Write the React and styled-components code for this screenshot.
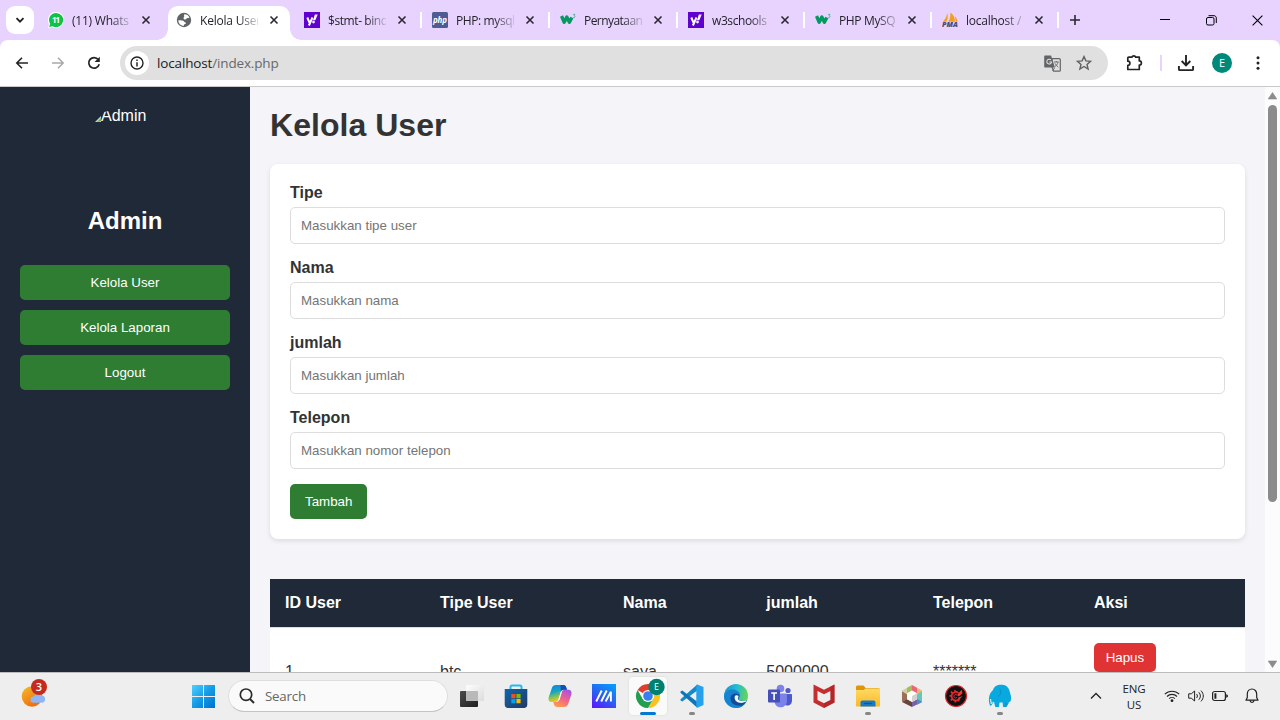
import React from "react";
import styled, { createGlobalStyle, css } from "styled-components";

const GlobalStyle = createGlobalStyle`
  * { box-sizing: border-box; }
  html, body { margin: 0; padding: 0; overflow: hidden; }
  body { font-family: "Liberation Sans", Arial, sans-serif; color: #333; }
`;

const uiFont = css`font-family: "Open Sans", "Noto Sans", sans-serif;`;

const Screen = styled.div`
  width: 1280px;
  height: 720px;
  display: flex;
  flex-direction: column;
  overflow: hidden;
  background: #e8d3ff;
`;

/* ---------- browser tab strip ---------- */
const TabStrip = styled.div`
  ${uiFont}
  display: flex;
  align-items: flex-start;
  height: 40px;
  flex: none;
  padding-left: 6px;
  background: #e8d3ff;
`;
const TabSearch = styled.div`
  width: 28px;
  height: 28px;
  margin: 6px 4px 0 0;
  border-radius: 9px;
  background: #fff;
  display: grid;
  place-items: center;
`;
const Tab = styled.div`
  width: ${(p) => p.$w}px;
  height: 40px;
  padding: 6px 0 6px 10px;
  display: flex;
  align-items: center;
  position: relative;
  flex: none;
`;
const ActiveShape = styled.div`
  position: absolute;
  z-index: 0;
  left: 2px;
  right: 4px;
  top: 6px;
  bottom: 0;
  border-radius: 10px 10px 0 0;
  background: #fff;
  &::before, &::after {
    content: "";
    position: absolute;
    bottom: 0;
    width: 11px;
    height: 11px;
  }
  &::before { right: 100%; background: radial-gradient(circle at 0 0, transparent 10.5px, #fff 11px); }
  &::after { left: 100%; background: radial-gradient(circle at 100% 0, transparent 10.5px, #fff 11px); }
`;
const Favicon = styled.div`
  width: 16px;
  height: 16px;
  z-index: 1;
  svg { display: block; }
`;
const TabTitle = styled.div`
  z-index: 1;
  width: 58px;
  margin-left: 8px;
  white-space: nowrap;
  font-size: 12px;
  letter-spacing: ${(p) => p.$ls || 0}px;
  line-height: 18px;
  padding-top: 1px;
  color: #25222b;
  mask-image: linear-gradient(90deg, #000 38px, transparent 62px);
`;
const TabClose = styled.div`
  z-index: 1;
  margin-left: ${(p) => (p.$tight ? 10 : 11)}px;
  width: 10px;
  height: 10px;
  svg { display: block; }
`;
const TabDivider = styled.div`
  width: 2px;
  height: 16px;
  margin-left: auto;
  background: #fff;
`;
const NewTab = styled.div`
  width: 32px;
  height: 40px;
  display: grid;
  place-items: center;
`;
const WindowControls = styled.div`
  margin-left: auto;
  display: flex;
  width: 138px;
  height: 40px;
`;
const WindowButton = styled.div`
  width: 46px;
  display: grid;
  place-items: center;
`;

/* ---------- toolbar ---------- */
const Toolbar = styled.div`
  ${uiFont}
  height: 47px;
  flex: none;
  display: flex;
  align-items: center;
  overflow: hidden;
  background: #fff;
  border-bottom: 1px solid #c9c9c9;
  border-radius: 8px 8px 0 0;
  padding-left: 4px;
`;
const ToolButton = styled.div`
  width: ${(p) => p.$w || 36}px;
  height: 34px;
  flex: none;
  display: grid;
  place-items: center;
`;
const Omnibox = styled.div`
  margin-left: 8px;
  width: 988px;
  height: 34px;
  flex: none;
  border-radius: 17px;
  background: #e0e0e0;
  display: flex;
  align-items: center;
  padding: 0 8px 0 5px;
`;
const SiteInfo = styled.div`
  width: 24px;
  height: 24px;
  border-radius: 50%;
  background: #fff;
  display: grid;
  place-items: center;
`;
const Address = styled.div`
  flex: 1;
  margin-left: 8px;
  font-size: 13.5px;
  letter-spacing: -0.15px;
  color: #202124;
  span { color: #66686c; }
`;
const ToolDivider = styled.div`
  width: 2px;
  height: 16px;
  flex: none;
  background: #e8d3ff;
`;
const Avatar = styled.div`
  width: 20px;
  height: 20px;
  border-radius: 50%;
  background: #00897b;
  color: #fff;
  font-size: 11px;
  line-height: 20px;
  text-align: center;
`;

/* ---------- page ---------- */
const Viewport = styled.div`
  display: flex;
  height: 585px;
  flex: none;
  overflow: hidden;
  background: #f4f4f9;
`;
const Sidebar = styled.aside`
  width: 250px;
  flex: none;
  padding: 20px;
  background: #1f2937;
  color: #fff;
  text-align: center;
`;
const Portrait = styled.div`
  width: 60px;
  height: 80px;
  margin: 0 auto 20px;
  display: flex;
  align-items: flex-start;
  font-size: 16px;
  line-height: 18px;
  svg { flex: none; margin: 9px 0 0 0; }
`;
const PortraitAlt = styled.span`
  clip-path: polygon(8px 0, 100% 0, 100% 100%, 0 100%, 0 9px, 3px 5px, 8px 4px);
`;
const Role = styled.h2`
  margin: 0 0 30px;
  font-size: 24px;
  line-height: 28px;
`;
const Button = styled.button`
  display: block;
  border: 0;
  margin: 0;
  font: 13.333px "Liberation Sans", Arial, sans-serif;
  line-height: 15px;
  color: #fff;
  background: ${(p) => (p.$danger ? "#e03333" : "#2e7d32")};
  padding: ${(p) => (p.$danger ? "7px 11.7px" : "10px 15px")};
  border-radius: 5px;
`;
const NavButton = styled(Button)`
  width: 210px;
  margin-bottom: 10px;
`;
const Main = styled.main`
  flex: 1;
  min-width: 0;
  padding: 20px;
`;
const Title = styled.h1`
  margin: 0 0 20px;
  font-size: 32px;
  letter-spacing: 0.04px;
  line-height: 37px;
`;
const FormCard = styled.form`
  background: #fff;
  padding: 20px;
  border-radius: 8px;
  box-shadow: 0 2px 5px rgba(0, 0, 0, 0.1);
  margin-bottom: 40px;
`;
const Field = styled.div`
  margin-bottom: 15px;
`;
const Label = styled.label`
  display: block;
  font-weight: bold;
  font-size: 16px;
  line-height: 18px;
  margin-bottom: 5px;
`;
const Input = styled.input`
  display: block;
  width: 100%;
  height: 37px;
  padding: 10px;
  border: 1px solid #ddd;
  border-radius: 5px;
  background: #fff;
  font: 13.333px "Liberation Sans", Arial, sans-serif;
  &::placeholder { color: #757575; }
`;
const Table = styled.table`
  width: 975px;
  table-layout: fixed;
  border-spacing: 0;
  background: #fff;
  font-size: 16px;
  line-height: 18px;
`;
const HeadCell = styled.th`
  width: ${(p) => p.$w}px;
  padding: 15px;
  height: 49px;
  text-align: left;
  color: #fff;
  background: #1f2937;
  border-bottom: 1px solid #ddd;
  background-clip: padding-box;
`;
const Cell = styled.td`
  height: 89px;
  padding: 15px;
  border-bottom: 1px solid #ddd;
  vertical-align: ${(p) => (p.$top ? "top" : "middle")};
`;
const Scrollbar = styled.div`
  width: 15px;
  flex: none;
  background: #fcfcfc;
  display: flex;
  flex-direction: column;
  align-items: center;
  padding: 5px 0 4px;
`;
const Thumb = styled.div`
  width: 9px;
  height: 397px;
  margin: 5px 0 auto;
  border-radius: 5px;
  background: #8b8b8b;
`;

/* ---------- taskbar ---------- */
const Taskbar = styled.div`
  ${uiFont}
  height: 48px;
  flex: none;
  border-top: 1px solid #bcbcbc;
  background: #eee;
  display: flex;
  align-items: center;
  padding: 0 0 1px 20px;
  color: #222;
`;
const Widgets = styled.div`
  width: 30px;
  height: 34px;
  margin-right: 142px;
  svg { display: block; }
`;
const Start = styled.div`
  width: 23px;
  height: 23px;
  margin: 1px 14px 0 0;
  svg { display: block; }
`;
const SearchBox = styled.div`
  width: 220px;
  height: 32px;
  margin: 0 2px 0 -1px;
  border-radius: 16px;
  background: #fafafa;
  border: 1px solid #dfdfdf;
  border-bottom-color: #c4c4c4;
  display: flex;
  align-items: center;
  gap: 10px;
  padding-left: 10px;
  font-size: 13.3px;
  letter-spacing: -0.2px;
  color: #666;
`;
const AppSlot = styled.div`
  width: 44px;
  height: 46px;
  display: flex;
  align-items: center;
  justify-content: center;
  position: relative;
`;
const AppTile = styled.div`
  width: 38px;
  height: 38px;
  border-radius: 4px;
  display: grid;
  place-items: center;
  ${(p) => p.$active && "background: #fafafa; box-shadow: 0 0 1px 1px #e4e4e4;"}
  svg { overflow: visible; }
`;
const Indicator = styled.div`
  position: absolute;
  top: 39px;
  height: 3px;
  border-radius: 2px;
  width: ${(p) => (p.$active ? 16 : 6)}px;
  background: ${(p) => (p.$active ? "#0078d4" : "#868686")};
`;
const Tray = styled.div`
  margin-left: auto;
  width: 200px;
  display: flex;
  align-items: center;
`;
const TrayItem = styled.div`
  width: ${(p) => p.$w}px;
  display: grid;
  place-items: center;
`;
const Language = styled.div`
  width: 44px;
  text-align: center;
  font-size: 11.5px;
  line-height: 16px;
  padding-top: 1px;
  letter-spacing: -0.1px;
`;

const Glyph = ({ w = 24, h = w, box = `0 0 ${w} ${h}`, children, ...rest }) => (
  <svg width={w} height={h} viewBox={box} fill="none" {...rest}>{children}</svg>
);

const WhatsApp = () => (
  <Glyph w={16}>
    <path d="M8 0a8 8 0 0 1 0 16c-1.400 0-2.600-.3-3.700-.9L0 16l1-4A8 8 0 0 1 8 0z" fill="#fff" />
    <path d="M8 .9a7.100 7.100 0 1 1-3.400 13.300l-3.400.7.900-3.200A7.100 7.100 0 0 1 8 .9z" fill="#10c24a" />
    <text x="8" y="10.900" fontSize="8" fontWeight="700" textAnchor="middle" fill="#fff" textLength="8">11</text>
  </Glyph>
);
const Globe = () => (
  <Glyph w={16}>
    <circle cx="8" cy="8" r="7.200" fill="#5f6368" />
    <path d="M8.400 2.300c2.300 0 4.100 1.200 5 3.200-1 .9-2.500.3-3.200 1.400-.8 1.200-2.400.3-2.600-.5-.3-1 .9-1.400.7-2.300-.2-.7-.6-1 .1-1.800zM2.200 8.300c1.600-.2 3.800.1 5 .4 1.200.3 1 1.600 2.200 1.800 1 .2.700 1.300-.4 1.500-1 .2-.7 1.300-1.700 1.900-2.800-.2-4.900-2.400-5.100-5.600z" fill="#fff" />
  </Glyph>
);
const Yahoo = () => (
  <Glyph w={16}>
    <path d="M0 0h16v16H0z" fill="#5f01d1" />
    <path d="M3.300 5.500l2.200 5.100M8.500 5.500l-3.600 8" stroke="#fff" strokeWidth="2" />
    <path d="M10.900 2.500h2.800l-2.400 5.700H9z" fill="#fff" />
    <circle cx="9.500" cy="10.100" r="1.350" fill="#fff" />
  </Glyph>
);
const Php = () => (
  <Glyph w={16}>
    <rect width="16" height="16" rx="1.500" fill="#4f5b93" />
    <text x="7.900" y="10.800" fontSize="8" fontStyle="italic" fontWeight="700" textAnchor="middle" fill="#fff" textLength="14">php</text>
  </Glyph>
);
const W3 = () => (
  <Glyph w={16}>
    <path d="M1.500 4L4.200 10.300 6.800 5 9.400 10.300 11.900 5.400" stroke="#059862" strokeWidth="3.400" strokeLinejoin="round" />
    <path d="M13.100 2.400h1.900l-.9 1.300c1.300.1 1.100 1.900-.2 1.900-.4 0-.7-.2-.9-.5" stroke="#2cae84" strokeWidth=".8" />
  </Glyph>
);
const Pma = () => (
  <Glyph w={16}>
    <path d="M5.200 1.200c.9 2.800.8 6-.9 8.500H.8c2-2 3.700-4.700 4.400-8.500zM8.200.5c3.300 2 4.700 5 4.800 9.200H6.500C8 7 8.700 4 8.200.5zM12.700 4.300c1.500 1.200 2.600 3 2.700 5.400h-1.800c0-2-.2-3.700-.9-5.400z" fill="#f89c1c" />
    <text x="0" y="15.400" fontSize="7" fontWeight="800" fontStyle="italic" fill="#454c78" textLength="15.800" lengthAdjust="spacingAndGlyphs">PMA</text>
  </Glyph>
);

const TABS = [
  { w: 128, title: "(11) Whats", ls: -0.22, icon: <WhatsApp /> },
  { w: 128, title: "Kelola User", ls: -0.2, icon: <Globe />, active: true },
  { w: 128, title: "$stmt- bind", ls: -0.42, icon: <Yahoo />, divider: true },
  { w: 128, title: "PHP: mysql", ls: -0.4, icon: <Php />, divider: true },
  { w: 128, title: "Pernyataan", ls: -0.55, icon: <W3 />, divider: true },
  { w: 127, title: "w3schools", ls: -0.4, icon: <Yahoo />, divider: true },
  { w: 127, title: "PHP MySQ", ls: -0.35, icon: <W3 />, divider: true },
  { w: 127, title: "localhost /", ls: -0.25, icon: <Pma />, divider: true },
];

const Close = () => <Glyph w={10}><path d="M1.500 1.500l7 7M8.500 1.500l-7 7" stroke="#2b2831" strokeWidth="1.600" /></Glyph>;

const TaskView = () => (
  <Glyph w={24}>
    <rect x="0" y="7" width="18" height="16" rx="1" fill="url(#tv)" />
    <rect x="6" y="1" width="18" height="16" rx="1" fill="url(#tw)" />
    <path d="M6 7h12v10H6z" fill="#b9b9b9" />
    <defs>
      <linearGradient id="tv" x2="1" y2="1"><stop stopColor="#4b4b4b" /><stop offset="1" stopColor="#202020" /></linearGradient>
      <linearGradient id="tw" x2="1" y2="1"><stop stopColor="#fdfdfd" /><stop offset="1" stopColor="#dcdcdc" /></linearGradient>
    </defs>
  </Glyph>
);
const Store = () => (
  <Glyph w={24}>
    <path d="M6.500 7V3c0-1 .6-1.600 1.500-1.600h8c.9 0 1.500.6 1.500 1.600v4" stroke="#27b8f3" strokeWidth="2" />
    <path d="M.7 5h22.600v15.500c0 2-1.300 3.500-3.300 3.500H4c-2 0-3.300-1.500-3.300-3.500z" fill="url(#st)" />
    <path d="M7.300 10h4.200v4.200H7.300z" fill="#f25022" /><path d="M12.400 10h4.200v4.200h-4.200z" fill="#7fba00" /><path d="M7.300 15.100h4.200v4.200H7.300z" fill="#00a4ef" /><path d="M12.400 15.100h4.200v4.200h-4.200z" fill="#ffb900" />
    <defs><linearGradient id="st" x2="1" y2="1"><stop stopColor="#0f66ac" /><stop offset="1" stopColor="#213a63" /></linearGradient></defs>
  </Glyph>
);
const Copilot = () => (
  <Glyph w={24}>
    <path d="M8.200 1h7.200c1.600 0 2.300 1 2.800 2.500l.7 2.300h-3.500c-1.700 0-2.200 1-2.700 2.500L10.500 15c-.6 1.800-1.400 3-3.400 3H4c-3 0-4-2-3.200-5L3.900 3.900C4.500 2 5.700 1 8.200 1z" fill="url(#ca)" />
    <path d="M15.800 23H9.200c-2 0-2.700-1-3.200-2.500l-.7-2.400h3.300c1.700 0 2.300-1 2.700-2.500L13.400 9c.6-2 1.500-3.200 3.500-3.200H20c3 0 4.100 2 3.300 5l-3.200 9.200c-.7 2-1.800 3-4.300 3z" fill="url(#cb)" />
    <path d="M12.500 1h3c1.600 0 2.300 1 2.800 2.500l.7 2.300h-3.600c-1.600 0-2.200.9-2.600 2.200z" fill="#144cb8" />
    <path d="M12.900 7.800L10.300 16h1.200l2.500-8.200z" fill="#f4f0f6" />
    <defs>
      <linearGradient id="ca" x2=".3" y2="1"><stop stopColor="#187dde" /><stop offset=".45" stopColor="#14a5c5" /><stop offset=".75" stopColor="#8fc34c" /><stop offset="1" stopColor="#f8c718" /></linearGradient>
      <linearGradient id="cb" x1=".8" x2=".3" y2="1"><stop stopColor="#a452e6" /><stop offset=".5" stopColor="#ee628f" /><stop offset="1" stopColor="#ff9a4d" /></linearGradient>
    </defs>
  </Glyph>
);
const MyAsus = () => (
  <Glyph w={24}>
    <path d="M0 0h24v24H0z" fill="url(#ma)" />
    <path d="M4.200 17.500L9.700 6.500M9.200 17.500l5.500-11M13.600 17.500l5.300-9.800V17.500" stroke="#fff" strokeWidth="1.900" strokeLinejoin="bevel" />
    <defs><linearGradient id="ma" x1=".8" x2=".2" y2="1"><stop stopColor="#0899fb" /><stop offset=".5" stopColor="#2764f1" /><stop offset="1" stopColor="#591cff" /></linearGradient></defs>
  </Glyph>
);
const Chrome = () => (
  <Glyph w={24}>
    <circle cx="12" cy="12" r="12" fill="#fff" />
    <path d="M12 12L1.600 6A12 12 0 0 1 22.400 6z" fill="#e33b2e" />
    <path d="M12 12V6h10.400A12 12 0 0 1 12 24l5.200-9z" fill="#fcc31e" />
    <path d="M12 12l5.200 3L12 24A12 12 0 0 1 1.600 6l5.200 9z" fill="#229e50" />
    <circle cx="12" cy="12" r="6.100" fill="#fff" /><circle cx="12" cy="12" r="4.800" fill="#397ff0" />
    <circle cx="20.500" cy="3" r="8.200" fill="#00806f" />
    <text x="20.500" y="6.300" fontSize="9" textAnchor="middle" fill="#fff">E</text>
  </Glyph>
);
const VsCode = () => (
  <Glyph w={24}>
    <path d="M17.300.4L.5 15.300v1.300l1.800 1L17.300 6.500z" fill="#168ac9" />
    <path d="M.5 7.500l1.800-1 15 11.300v5.900L.5 8.700z" fill="#0d75b9" />
    <path d="M17.300.4L23.500 3v18l-6.200 2.700-1-.6V1z" fill="#27a1eb" />
  </Glyph>
);
const Edge = () => (
  <Glyph w={24}>
    <circle cx="12" cy="12" r="12" fill="url(#ea)" />
    <path d="M.1 12.500C.5 8 4 5.500 8.500 5.500c4.200 0 7.600 2.400 7.600 6 0 2.200-1.600 2.500-1.500 3.700.2 2.200 5.400 2.800 8.200.7C21 21 17 24 12 24 5.500 24 .1 18.700.1 12.500z" fill="#1484d2" />
    <path d="M6.500 14.500c0-3 2.200-5 5.500-5 2 0 3.500 1.400 3.200 3-.2 1-1.600 1.600-.6 2.800 1.500 2 5.600 2.200 8.200.6-1 2.300-2.600 4.300-4.600 5.600-5.400 1-11.700-1.300-11.700-7z" fill="#124c96" />
    <path d="M10.700 12.500c.6-1.400 2.700-1.700 3.800-.5.300 1.200-1.200 2-.4 3.200 1 1.700 5.500 2.500 8.500.9l-.8 1.700c-4.800 2.500-12 .7-11.100-5.300z" fill="#f1f8fa" />
    <defs><linearGradient id="ea" x1="0" x2="1" y1=".2" y2=".4"><stop stopColor="#1794d3" /><stop offset=".5" stopColor="#25bdd0" /><stop offset="1" stopColor="#68d552" /></linearGradient></defs>
  </Glyph>
);
const Teams = () => (
  <Glyph w={24}>
    <circle cx="12.500" cy="4.500" r="3.800" fill="#7b83eb" /><circle cx="20" cy="6.500" r="2.600" fill="#5059c9" />
    <path d="M15 10h8c.6 0 1 .4 1 1v5.500c0 3-2 5-4.700 5-2.600 0-4.300-2-4.300-4.600z" fill="#5059c9" />
    <path d="M6.500 9.500h11.200c.7 0 1.200.5 1.200 1.200v6c0 4-2.700 6.600-6.400 6.600-3.600 0-6-2.700-6-6.600z" fill="#7b83eb" />
    <rect x="0" y="5.500" width="12" height="13" rx="1" fill="#464eb8" />
    <path d="M3.200 9h5.800M6.100 9v7" stroke="#fff" strokeWidth="1.600" />
  </Glyph>
);
const McAfee = () => (
  <Glyph w={24}>
    <path d="M1.500.5L12 5.800 22.500.5v18L12 24 1.500 18.500z" fill="#c52e2e" />
    <path d="M5.500 7l6.500 3.200L18.500 7v9L12 19.200 5.500 16z" fill="#eee" />
    <path d="M18.500 2.500l4-2v18L12 24v-4.800l6.500-3.200z" fill="#a82224" fillOpacity=".6" />
  </Glyph>
);
const Explorer = () => (
  <Glyph w={24}>
    <path d="M0 3c0-.8.700-1.500 1.500-1.500h6l2.200 2.600H22c1.100 0 2 .9 2 2V12H0z" fill="#dc9607" />
    <path d="M0 6h7.500l2-1.500h13c.8 0 1.500.6 1.500 1.500v16.500H0z" fill="url(#fx)" />
    <path d="M4.500 22.500v-4c0-1.300.8-2 2-2h11c1.200 0 2 .7 2 2v4z" fill="#1679c7" />
    <path d="M8 19.500h8" stroke="#0b5497" strokeWidth="1.200" />
    <defs><linearGradient id="fx" x2="0" y2="1"><stop stopColor="#ffda68" /><stop offset="1" stopColor="#fbb91f" /></linearGradient></defs>
  </Glyph>
);
const HexApp = () => (
  <Glyph w={24}>
    <path d="M12 1l5 2.800v5.700L12 7z" fill="#eb6576" /><path d="M12 1L7 3.800v5.700L12 7z" fill="#a0bf56" />
    <path d="M7 3.800L2 6.500v6l5-3z" fill="#d1d0a4" /><path d="M17 3.800l5 2.700v6l-5-3z" fill="#eeb576" />
    <path d="M2 7.500l5 2.800v5l-5 2.800z" fill="#9b7055" /><path d="M22 7.500l-5 2.800v5l5 2.800z" fill="#63c7ba" />
    <path d="M2 18l5-3 5 2.800V23z" fill="#694637" /><path d="M22 18l-5-3-5 2.800V23z" fill="#7660a6" />
    <path d="M17 15l5 3-5 2.700z" fill="#5588cf" />
    <path d="M12 6.500l5 2.800v5.900l-5 2.800-5-2.800V9.300z" fill="#fff" /><path d="M12 12l5-2.700v5.900l-5 2.800z" fill="#d2d2ce" />
  </Glyph>
);
const GearApp = () => (
  <Glyph w={24}>
    <circle cx="12" cy="12" r="10.500" fill="#111" stroke="#d9252c" strokeWidth="1.200" />
    <path d="M14.500 8.800a4.300 4.300 0 1 0 1.200 5.400M7 7.500l1.200 1.300M5.500 11.800h2M6.800 16.300l1.300-1.200M11.300 18.500v-2M11 6v2M15.200 17.300l-1-1.300" stroke="#e32930" strokeWidth="1.700" />
    <path d="M13 11l4.600-5.200.9 3.200-3.600 3.600zM14 13.800l4.600-1.800-3.500 3.500z" fill="#f33a3f" />
    <path d="M13 11.300a1.700 1.700 0 1 0-.2 2.200" stroke="#e32930" />
  </Glyph>
);
const Elephant = () => (
  <Glyph w={24}>
    <path d="M5 6C6 2 10 .3 14.500.8c3.500.3 6.200 2.600 7 6 .8 3.200 2.500 7 1.100 10.200-.5 1-1.500 1.300-1.900.7l1-1.500c-1 2.500-1.500 5-3.600 6.800H15l-.4-4.500-3.100-.1-.5 4.600H7.300L6 18l-1.300-.2c0 2-.8 3.600-2.600 4.200-1.200-3.400-1.700-7.200-.6-10.500C2.100 9 3.500 7.500 5 6z" fill="#08a9de" />
    <path d="M11.500 4.500c2 2.500 1.500 6-1.500 8M18 19v4" stroke="#087fae" strokeWidth=".6" />
    <path d="M2.500 15l.8 5" stroke="#e9f7fb" strokeWidth="1.100" />
  </Glyph>
);

const APPS = [
  { id: "taskview", icon: <TaskView /> }, { id: "store", icon: <Store /> }, { id: "copilot", icon: <Copilot /> },
  { id: "asus", icon: <MyAsus /> }, { id: "chrome", icon: <Chrome />, active: true }, { id: "code", icon: <VsCode />, open: true },
  { id: "edge", icon: <Edge /> }, { id: "teams", icon: <Teams /> }, { id: "mcafee", icon: <McAfee /> },
  { id: "explorer", icon: <Explorer />, open: true }, { id: "hex", icon: <HexApp /> }, { id: "gear", icon: <GearApp /> },
  { id: "elephant", icon: <Elephant />, open: true },
];

const FIELDS = [
  ["Tipe", "Masukkan tipe user"],
  ["Nama", "Masukkan nama"],
  ["jumlah", "Masukkan jumlah"],
  ["Telepon", "Masukkan nomor telepon"],
];
const COLUMNS = [["ID User", 155], ["Tipe User", 183], ["Nama", 143.3], ["jumlah", 166.7], ["Telepon", 161], ["Aksi", 166]];
const ROW = ["1", "btc", "saya", "5000000", "*******"];

function BrowserTabs() {
  return (
    <TabStrip>
      <TabSearch><Glyph w={10}><path d="M1.500 3.200L5 6.700l3.500-3.500" stroke="#1f1f1f" strokeWidth="1.800" /></Glyph></TabSearch>
      {TABS.map((t) => (
        <Tab key={t.title} $w={t.w}>
          {t.active && <ActiveShape />}
          <Favicon>{t.icon}</Favicon>
          <TabTitle $ls={t.ls}>{t.title}</TabTitle>
          <TabClose $tight={t.w === 127}><Close /></TabClose>
          {t.divider && <TabDivider />}
        </Tab>
      ))}
      <NewTab><Glyph w={12}><path d="M6 1v10M1 6h10" stroke="#2b2831" strokeWidth="1.600" /></Glyph></NewTab>
      <WindowControls>
        <WindowButton><Glyph w={10}><path d="M0 4.500h10" stroke="#000" /></Glyph></WindowButton>
        <WindowButton>
          <Glyph w={11}><rect x=".5" y="2.500" width="7.500" height="7.500" rx="1.500" stroke="#000" /><path d="M2.500.7H8c1.300 0 2.300 1 2.300 2.300v5" stroke="#000" /></Glyph>
        </WindowButton>
        <WindowButton><Glyph w={11}><path d="M.6.600l9.800 9.800M10.400.600L.6 10.400" stroke="#000" strokeWidth="1.100" /></Glyph></WindowButton>
      </WindowControls>
    </TabStrip>
  );
}

function BrowserToolbar() {
  return (
    <Toolbar>
      <ToolButton><Glyph w={14}><path d="M13 7H2M7 1.800L1.800 7 7 12.200" stroke="#242426" strokeWidth="1.600" /></Glyph></ToolButton>
      <ToolButton><Glyph w={14}><path d="M1 7h11M7 1.800L12.200 7 7 12.200" stroke="#a9a9ab" strokeWidth="1.500" /></Glyph></ToolButton>
      <ToolButton>
        <Glyph w={14}><path d="M11.300 3.600A5.300 5.300 0 1 0 12.200 8.300" stroke="#242426" strokeWidth="1.700" /><path d="M12.800.8v5.300H7.600z" fill="#242426" /></Glyph>
      </ToolButton>
      <Omnibox>
        <SiteInfo>
          <Glyph w={14}><circle cx="7" cy="7" r="6" stroke="#242426" strokeWidth="1.400" /><path d="M7 6.200v4.200M7 3.500v1.500" stroke="#242426" strokeWidth="1.500" /></Glyph>
        </SiteInfo>
        <Address>localhost<span>/index.php</span></Address>
        <ToolButton $w={32}>
          <Glyph w={17} h={17}>
            <path d="M8 3.700h7.300c.6 0 1 .4 1 1v10.500c0 .6-.4 1-1 1H9.600L8 12z" fill="#e0e0e0" stroke="#626568" strokeWidth="1.200" />
            <path d="M1.200.6h5.900l3.800 12H1.200c-.6 0-1-.4-1-1v-10c0-.6.400-1 1-1z" fill="#626568" />
            <path d="M7 5a2.400 2.400 0 1 0 .6 2H5.300" stroke="#e0e0e0" strokeWidth="1.100" />
            <path d="M9.800 7h5M12.300 6v1M14 7.200c-.5 2-1.700 3.400-3.200 4.500M11 8.300c.8 1.600 1.900 2.800 3.300 3.800M8.500 16l2.200-3.200" stroke="#626568" strokeWidth=".9" />
          </Glyph>
        </ToolButton>
        <ToolButton $w={32}>
          <Glyph w={16}><path d="M8 1.600l1.900 4.300 4.700.4L11 9.400l1.100 4.600L8 11.500 3.900 14 5 9.400 1.400 6.300l4.700-.4z" stroke="#5f6265" strokeWidth="1.400" /></Glyph>
        </ToolButton>
      </Omnibox>
      <ToolButton $w={52}>
        <Glyph w={18}><path d="M3.700 3.200h3.200a2 2 0 0 1 3.800 0h3.600v3.700a2 2 0 0 1 0 4.200v4.400H2.800v-4.100a2 2 0 0 0 0-4.200V4.100c0-.5.300-.9.900-.9z" stroke="#242426" strokeWidth="1.700" strokeLinejoin="round" /></Glyph>
      </ToolButton>
      <ToolDivider />
      <ToolButton $w={48}>
        <Glyph w={18}><path d="M9 1v10M4.700 7L9 11.300 13.300 7M1.900 12v3.200c0 .5.400.9.900.9h12.400c.5 0 .9-.4.900-.9V12" stroke="#242426" strokeWidth="1.900" /></Glyph>
      </ToolButton>
      <ToolButton $w={24}><Avatar>E</Avatar></ToolButton>
      <ToolButton $w={48}>
        <Glyph w={4} h={16}><circle cx="2" cy="2.700" r="1.500" fill="#242426" /><circle cx="2" cy="8" r="1.500" fill="#242426" /><circle cx="2" cy="13.300" r="1.500" fill="#242426" /></Glyph>
      </ToolButton>
    </Toolbar>
  );
}

function AdminPage() {
  return (
    <Viewport>
      <Sidebar>
        <Portrait>
          <Glyph w={6} h={7}><path d="M0 6L6 0v6z" fill="#c8ced0" /><path d="M2 6l4-4v3z" fill="#62ad52" /></Glyph>
          <PortraitAlt>Admin</PortraitAlt>
        </Portrait>
        <Role>Admin</Role>
        <NavButton>Kelola User</NavButton>
        <NavButton>Kelola Laporan</NavButton>
        <NavButton>Logout</NavButton>
      </Sidebar>
      <Main>
        <Title>Kelola User</Title>
        <FormCard>
          {FIELDS.map(([label, hint]) => (
            <Field key={label}><Label>{label}</Label><Input placeholder={hint} /></Field>
          ))}
          <Button type="button">Tambah</Button>
        </FormCard>
        <Table>
          <thead><tr>{COLUMNS.map(([name, w]) => <HeadCell key={name} $w={w}>{name}</HeadCell>)}</tr></thead>
          <tbody>
            <tr>
              {ROW.map((v) => <Cell key={v}>{v}</Cell>)}
              <Cell $top><Button $danger>Hapus</Button></Cell>
            </tr>
          </tbody>
        </Table>
      </Main>
      <Scrollbar>
        <Glyph w={9} h={8}><path d="M4.500.5L8.800 7H.2z" fill="#8b8b8b" stroke="#8b8b8b" strokeWidth=".6" strokeLinejoin="round" /></Glyph>
        <Thumb />
        <Glyph w={9} h={8}><path d="M4.500 7.500L8.800 1H.2z" fill="#8b8b8b" stroke="#8b8b8b" strokeWidth=".6" strokeLinejoin="round" /></Glyph>
      </Scrollbar>
    </Viewport>
  );
}

function DesktopTaskbar() {
  return (
    <Taskbar>
      <Widgets>
        <Glyph w={30} h={34}>
          <circle cx="12" cy="17.500" r="10.300" fill="url(#sun)" />
          <path d="M13.500 23.800a3.200 3.200 0 0 1 .2-6.400 4.300 4.300 0 0 1 7.600-1 3.600 3.600 0 0 1 .2 7.400z" fill="#8eb6f4" />
          <circle cx="19" cy="8" r="8" fill="#c42b1c" />
          <text x="19" y="12" fontSize="11" fontWeight="600" textAnchor="middle" fill="#fff">3</text>
          <defs><linearGradient id="sun" x2=".6" y2="1"><stop stopColor="#f2bd2b" /><stop offset="1" stopColor="#f16b0d" /></linearGradient></defs>
        </Glyph>
      </Widgets>
      <Start>
        <Glyph w={23}>
          <path d="M0 0h11v11H0zM12 0h11v11H12zM0 12h11v11H0zM12 12h11v11H12z" fill="url(#win)" />
          <defs><linearGradient id="win" x2="1" y2="1"><stop stopColor="#4fd0ff" /><stop offset=".5" stopColor="#159be6" /><stop offset="1" stopColor="#0071ce" /></linearGradient></defs>
        </Glyph>
      </Start>
      <SearchBox>
        <Glyph w={16}><circle cx="7" cy="6.700" r="5.700" stroke="#2b2b2b" strokeWidth="1.700" /><path d="M11 11l4 4" stroke="#2b2b2b" strokeWidth="2" /></Glyph>
        Search
      </SearchBox>
      {APPS.map((a) => (
        <AppSlot key={a.id}>
          <AppTile $active={a.active}>{a.icon}</AppTile>
          {(a.active || a.open) && <Indicator $active={a.active} />}
        </AppSlot>
      ))}
      <Tray>
        <TrayItem $w={32}><Glyph w={12}><path d="M1 8.500l5-5 5 5" stroke="#222" strokeWidth="1.300" /></Glyph></TrayItem>
        <Language>ENG<br />US</Language>
        <TrayItem $w={32}>
          <Glyph w={16}><path d="M.8 6.200a10.200 10.200 0 0 1 14.400 0M3 8.500a7 7 0 0 1 10 0M5.200 10.600a4 4 0 0 1 5.600 0" stroke="#222" strokeWidth="1.100" /><circle cx="8" cy="12.700" r="1.400" fill="#222" /></Glyph>
        </TrayItem>
        <TrayItem $w={16}>
          <Glyph w={16}><path d="M.7 5.800h2.600L6.600 3v10L3.300 10.200H.7zM8.600 6c1 1.200 1 2.800 0 4M10.700 4.200c2.200 2.300 2.200 5.300 0 7.600M12.900 2.600c3.200 3.200 3.200 7.600 0 10.800" stroke="#222" /></Glyph>
        </TrayItem>
        <TrayItem $w={32}>
          <Glyph w={16} h={12}><rect x=".6" y="1.500" width="12.800" height="9" rx="2" stroke="#222" strokeWidth="1.200" /><path d="M2.400 3.300h2v5.400h-2zM14.200 4.200c1.400.3 1.800.9 1.800 1.800s-.4 1.500-1.800 1.800z" fill="#222" /></Glyph>
        </TrayItem>
        <TrayItem $w={32}>
          <Glyph w={14} h={16}><path d="M1 12.200l1.300-2.800V6.200C2.300 3.300 4.300 1 7 1s4.700 2.300 4.700 5.200v3.200l1.300 2.800zM5 12.500c.2 2.500 3.800 2.500 4 0" stroke="#222" strokeWidth="1.200" strokeLinejoin="round" /></Glyph>
        </TrayItem>
      </Tray>
    </Taskbar>
  );
}

export default function App() {
  return (
    <Screen>
      <GlobalStyle />
      <BrowserTabs />
      <BrowserToolbar />
      <AdminPage />
      <DesktopTaskbar />
    </Screen>
  );
}
